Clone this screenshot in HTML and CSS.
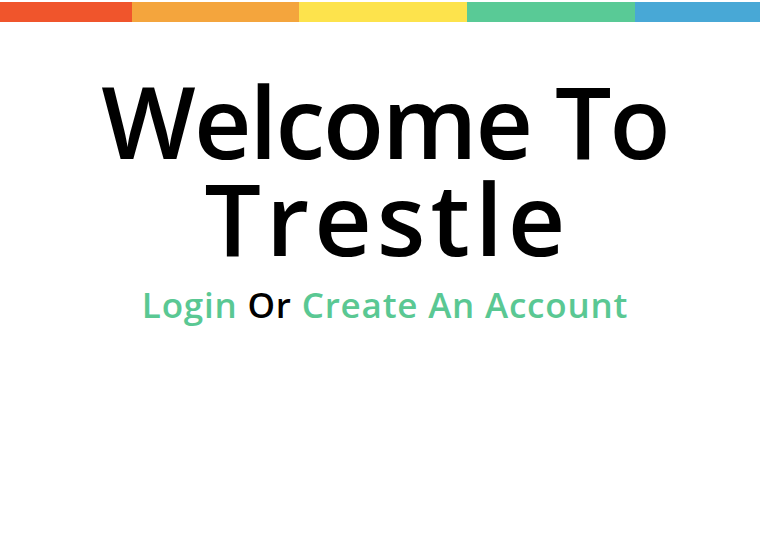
FILE: index.html
```html
<!DOCTYPE html>
<html>
<head>
<meta charset="utf-8">
<link rel="stylesheet" href="styles.css">
</head>
<body>
<div class="stripe">
  <div class="seg s1"></div>
  <div class="seg s2"></div>
  <div class="seg s3"></div>
  <div class="seg s4"></div>
  <div class="seg s5"></div>
</div>
<main class="hero">
  <h1 class="title"><span class="line1">Welcome To</span><br><span class="line2">Trestle</span></h1>
  <p class="sub"><a class="link" href="#">Login</a> <span class="or">Or</span> <a class="link" href="#">Create An Account</a></p>
</main>
</body>
</html>
```
FILE: styles.css
```css
html, body { margin: 0; padding: 0; background: #fff; }
body { font-family: "Open Sans", "Lato", sans-serif; }
.stripe { display: flex; height: 20px; margin-top: 2px; }
.seg { height: 100%; }
.s1 { width: 132px; background: #f0552c; }
.s2 { width: 167px; background: #f4a53d; }
.s3 { width: 168px; background: #fde34c; }
.s4 { width: 168px; background: #59ca96; }
.s5 { flex: 1; background: #48a8d6; }
.hero { text-align: center; padding-left: 10px; }
.title { margin: 50px 0 0; font-size: 100px; line-height: 97px; font-weight: 600; color: #000; }
.line1 { letter-spacing: -2px; }
.line2 { letter-spacing: 5px; padding-left: 5px; }
.sub { margin: 15px 0 0; font-size: 35px; line-height: 48px; font-weight: 600; letter-spacing: 0.8px; }
.link { color: #5ac893; text-decoration: none; }
.or { color: #000; }
```
